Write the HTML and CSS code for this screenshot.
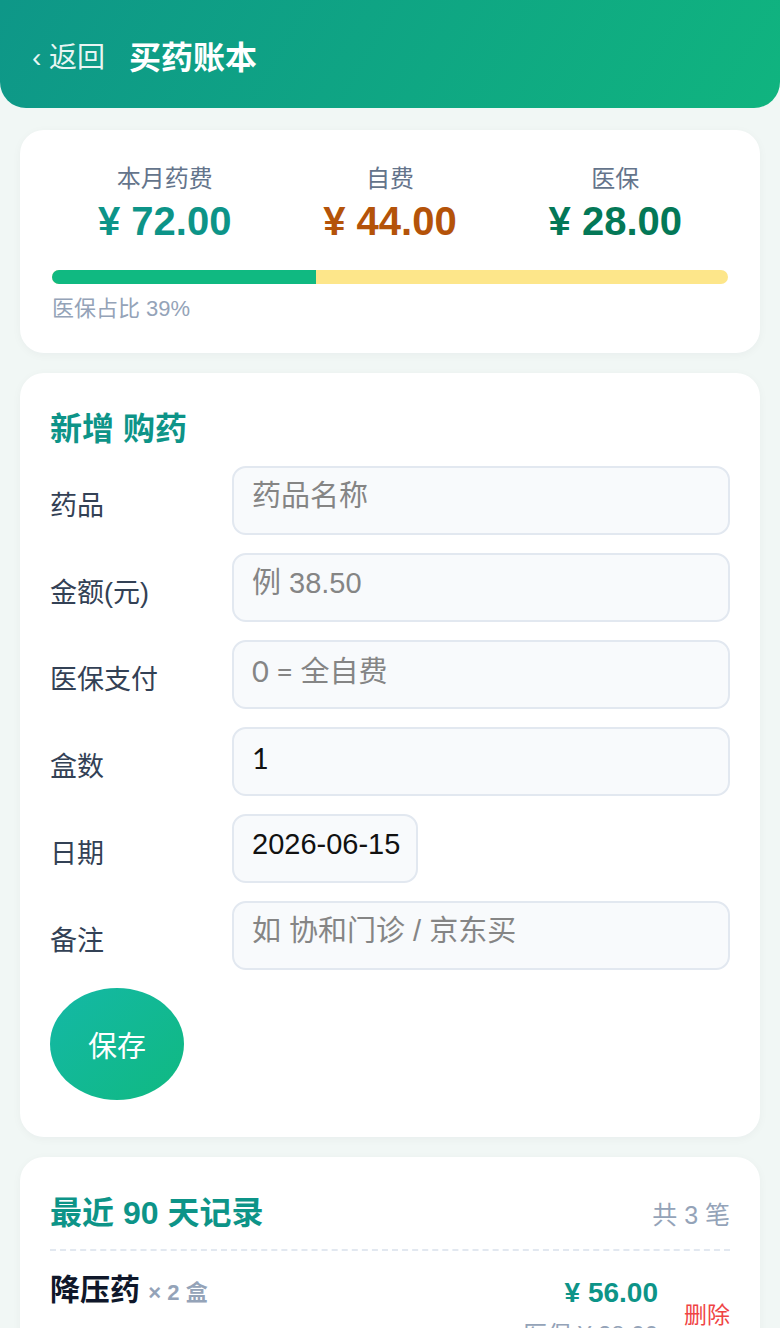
FILE: index.html
```html
<!DOCTYPE html>
<html lang="zh-CN">
<head>
<meta charset="utf-8">
<title>买药账本</title>
<link rel="stylesheet" href="styles.css">
</head>
<body>
<header class="topbar">
  <span class="back">‹ 返回</span>
  <h1 class="title">买药账本</h1>
</header>
<main class="page">
  <section class="card summary">
    <div class="stats">
      <div class="stat">
        <div class="stat-label">本月药费</div>
        <div class="stat-value v-total">¥ 72.00</div>
      </div>
      <div class="stat">
        <div class="stat-label">自费</div>
        <div class="stat-value v-self">¥ 44.00</div>
      </div>
      <div class="stat">
        <div class="stat-label">医保</div>
        <div class="stat-value v-ins">¥ 28.00</div>
      </div>
    </div>
    <div class="bar"><div class="bar-fill" style="width:39%"></div></div>
    <div class="bar-caption">医保占比 39%</div>
  </section>

  <section class="card form-card">
    <h2 class="card-title">新增 购药</h2>
    <div class="form">
      <label class="row"><span class="lbl">药品</span><input class="inp" type="text" placeholder="药品名称"></label>
      <label class="row"><span class="lbl">金额(元)</span><input class="inp" type="text" placeholder="例 38.50"></label>
      <label class="row"><span class="lbl">医保支付</span><input class="inp num" type="text" placeholder="0 = 全自费"></label>
      <label class="row"><span class="lbl">盒数</span><input class="inp num" type="text" value="1"></label>
      <label class="row"><span class="lbl">日期</span><input class="inp date" type="text" value="2026-06-15"></label>
      <label class="row"><span class="lbl">备注</span><input class="inp" type="text" placeholder="如 协和门诊 / 京东买"></label>
    </div>
    <button class="save" type="button">保存</button>
  </section>

  <section class="card list-card">
    <div class="list-head">
      <h2 class="card-title">最近 90 天记录</h2>
      <span class="count">共 3 笔</span>
    </div>
    <div class="record">
      <div class="rec-main">
        <div class="rec-name">降压药 <span class="rec-qty">× 2 盒</span></div>
        <div class="rec-meta">2026-06-15 · 社区药房</div>
      </div>
      <div class="rec-money">
        <div class="rec-amt">¥ 56.00</div>
        <div class="rec-ins">医保 ¥ 28.00</div>
      </div>
      <button class="del" type="button">删除</button>
    </div>
  </section>
</main>
</body>
</html>
```

FILE: styles.css
```css
html, body {
  margin: 0;
  padding: 0;
}
body {
  background: #f1f7f5;
  font-family: "Liberation Sans", "Noto Sans CJK SC", sans-serif;
  color: #1e293b;
  overflow: hidden;
}
.topbar {
  height: 108px;
  box-sizing: border-box;
  padding: 2px 32px 0;
  display: flex;
  align-items: center;
  gap: 24px;
  background: linear-gradient(120deg, #0e9788 0%, #10b47f 100%);
  border-radius: 0 0 26px 26px;
  color: #fff;
}
.back {
  font-size: 28px;
  color: rgba(255, 255, 255, 0.92);
}
.title {
  margin: 0;
  font-size: 32px;
  font-weight: 700;
}
.page {
  padding: 22px 20px;
  display: flex;
  flex-direction: column;
  gap: 20px;
}
.card {
  background: #fff;
  border-radius: 24px;
  box-shadow: 0 2px 10px rgba(15, 23, 42, 0.04);
  padding: 32px 30px;
}
.summary {
  padding: 32px 32px 29px;
}
.stats {
  display: grid;
  grid-template-columns: 1fr 1fr 1fr;
  text-align: center;
}
.stat-label {
  font-size: 24px;
  line-height: 34px;
  color: #64748b;
}
.stat-value {
  font-size: 40px;
  line-height: 50px;
  font-weight: 700;
}
.v-total { color: #0d9488; }
.v-self { color: #b45309; }
.v-ins { color: #047857; }
.bar {
  margin-top: 24px;
  height: 14px;
  border-radius: 7px;
  background: #fde68a;
  overflow: hidden;
}
.bar-fill {
  height: 100%;
  background: #10b981;
}
.bar-caption {
  margin-top: 9px;
  font-size: 22px;
  line-height: 31px;
  color: #94a3b8;
}
.card-title {
  margin: 0;
  font-size: 32px;
  line-height: 48px;
  font-weight: 700;
  color: #0d9488;
}
.form-card {
  padding-bottom: 37px;
}
.form {
  margin-top: 13px;
  display: flex;
  flex-direction: column;
  gap: 18px;
}
.row {
  display: flex;
  align-items: center;
}
.lbl {
  width: 182px;
  flex: none;
  font-size: 27px;
  color: #334155;
  padding-top: 6px;
}
.inp {
  flex: 1;
  min-width: 0;
  height: 69px;
  box-sizing: border-box;
  border: 2px solid #e2e8f0;
  border-radius: 14px;
  background: #f8fafc;
  padding: 0 18px 8px;
  font-family: "Liberation Sans", "Noto Sans CJK SC", sans-serif;
  font-size: 29px;
  color: #111;
  outline: none;
}
.inp::placeholder {
  color: #858585;
}
.inp.num {
  font-family: "Lato", "Noto Sans CJK SC", sans-serif;
  font-size: 29px;
}
.inp.date {
  flex: none;
  width: 186px;
  padding-right: 8px;
}
.save {
  margin-top: 18px;
  width: 134px;
  height: 112px;
  border: none;
  border-radius: 50%;
  background: linear-gradient(135deg, #14b8a6, #10b981);
  color: #fff;
  font-family: "Liberation Sans", "Noto Sans CJK SC", sans-serif;
  font-size: 29px;
  padding: 0;
}
.list-head {
  display: flex;
  justify-content: space-between;
  align-items: center;
  padding-bottom: 12px;
  border-bottom: 2px dashed #e2e8f0;
}
.count {
  font-size: 25px;
  color: #94a3b8;
}
.record {
  display: flex;
  align-items: center;
  padding-top: 18px;
  gap: 26px;
}
.rec-main {
  flex: 1;
}
.rec-name {
  font-size: 30px;
  line-height: 42px;
  font-weight: 700;
  color: #0f172a;
}
.rec-qty {
  font-size: 22px;
  color: #94a3b8;
  font-weight: 700;
}
.rec-meta {
  margin-top: 10px;
  font-size: 22px;
  color: #94a3b8;
}
.rec-money {
  text-align: right;
}
.rec-amt {
  font-size: 28px;
  line-height: 39px;
  font-weight: 700;
  color: #0d9488;
}
.rec-ins {
  margin-top: 6px;
  font-size: 24px;
  line-height: 34px;
  color: #94a3b8;
}
.del {
  border: none;
  background: none;
  padding: 0;
  font-family: "Liberation Sans", "Noto Sans CJK SC", sans-serif;
  font-size: 23px;
  color: #ef4444;
}
```
